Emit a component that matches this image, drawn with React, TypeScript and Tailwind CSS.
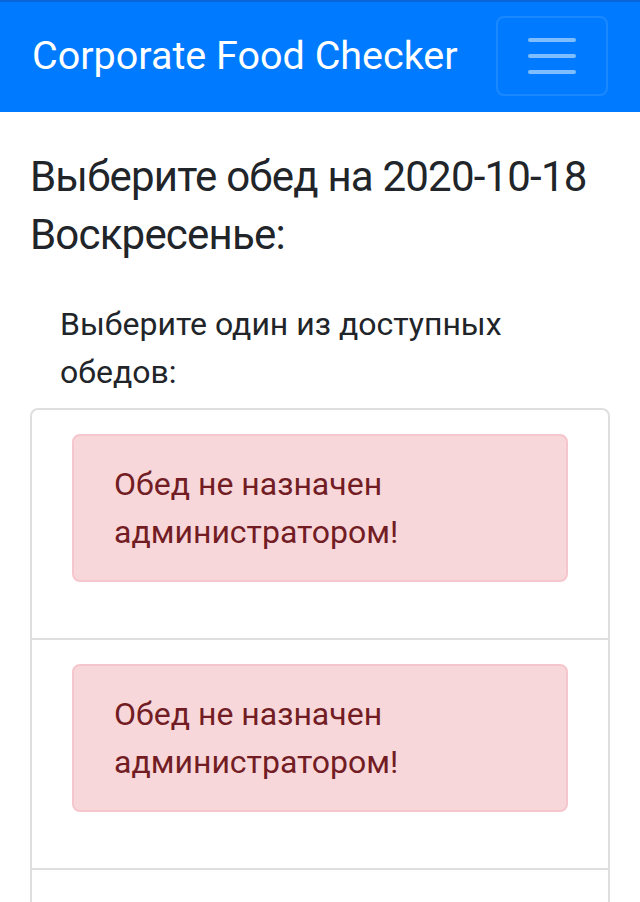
export default function App() {
  const alerts = [0, 1];

  return (
    <div className="min-h-screen bg-white text-[#212529]" style={{ fontFamily: "Roboto, 'Noto Sans', sans-serif" }}>
      {/* navbar */}
      <nav className="flex items-center justify-between border-t-2 border-[#0a66d8] bg-[#007bff] px-8 pb-4 pt-[14px]">
        <span className="py-[10px] text-[39.5px] leading-[60px] text-white">Corporate Food Checker</span>
        <button className="flex h-[80px] w-[112px] items-center justify-center rounded-lg border-2 border-white/10">
          <svg width="60" height="60" viewBox="0 0 30 30">
            <path d="M4 7h22M4 15h22M4 23h22" stroke="rgba(255,255,255,0.5)" strokeWidth="2" strokeLinecap="round" />
          </svg>
        </button>
      </nav>

      <main className="px-[30px] pt-9">
        <h4 className="mb-9 whitespace-nowrap text-[42px] font-normal leading-[58px] tracking-[-0.8px]">
          Выберите обед на 2020-10-18
          <br />
          Воскресенье:
        </h4>

        <p className="mb-[12px] pl-[30px] text-[32px] leading-[48px]">Выберите один из доступных обедов:</p>

        <ul className="rounded-lg border-2 border-[#dfdfdf]">
          {alerts.map((i) => (
            <li key={i} className="border-[#dfdfdf] px-[40px] py-6 [&:not(:first-child)]:border-t-2">
              <div className="mb-8 rounded-lg border-2 border-[#f5c6cb] bg-[#f8d7da] px-10 py-6 text-[32px] leading-[48px] text-[#721c24]">
                Обед не назначен администратором!
              </div>
            </li>
          ))}
          <li className="h-[120px] border-t-2 border-[#dfdfdf]" />
        </ul>
      </main>
    </div>
  );
}
